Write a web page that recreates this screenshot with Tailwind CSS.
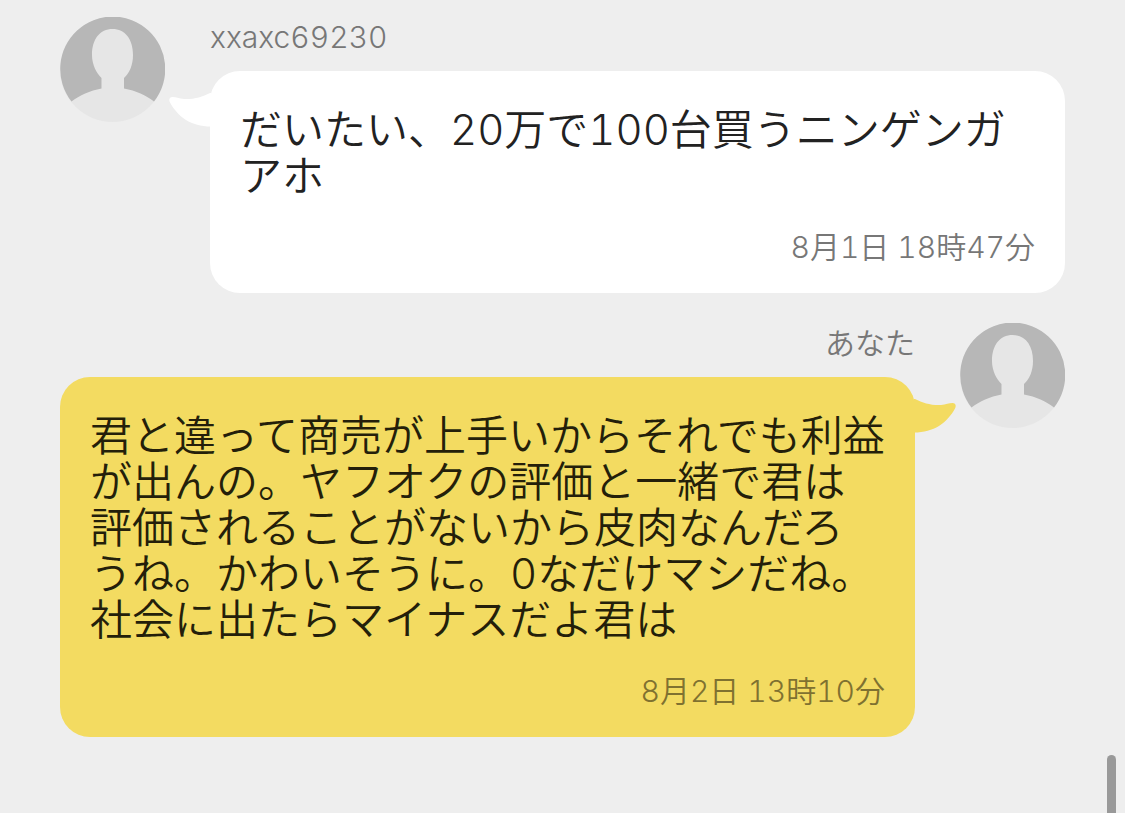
<!DOCTYPE html>
<html lang="ja">
<head>
<meta charset="utf-8">
<meta name="viewport" content="width=device-width, initial-scale=1">
<title>メッセージ</title>
<script src="https://cdn.jsdelivr.net/npm/@tailwindcss/browser@4"></script>
</head>
<body class="min-h-screen overflow-hidden bg-[#eeeeee] font-['Inter','Noto_Sans_CJK_JP',sans-serif] font-[350] tabular-nums text-[#222222]">
<svg class="hidden" aria-hidden="true">
  <symbol id="person" viewBox="0 0 105 105">
    <circle cx="52.500" cy="52.500" r="52.500" fill="#e6e6e6"/>
    <path fill="#b7b7b7" d="M11.500 84.500A52.500 52.500 0 1 1 94 84.500C86 78.500 76 73.500 64 71.500V61C69.500 56 73 48 73 38C73 22 65 12 52.500 12C40 12 32 22 32 38C32 48 36.500 56 41.500 61V71.500C30 73.500 19.500 78.500 11.500 84.500Z"/>
  </symbol>
  <symbol id="tail" viewBox="0 0 42 36">
    <path fill="currentColor" d="M41 1C33 5 25 7.500 15 7C10 6.500 7 5 3.500 5C.5 5 -.5 7.500 1 10.500C9 25 22 34.500 42 34.500V1Z"/>
  </symbol>
</svg>

<main class="flex flex-col gap-[30px] px-[60px] pt-[17px]">
  <article class="flex items-start gap-[45px]">
    <svg class="size-[105px] shrink-0" role="img" aria-label="xxaxc69230"><use href="#person"/></svg>
    <div class="min-w-0 flex-1">
      <h2 class="mb-[14px] text-[30px] leading-[40px] text-[#777777]">xxaxc69230</h2>
      <div class="relative rounded-[30px] bg-white px-[30px] pt-[36px] pb-[28px]">
        <svg class="absolute top-[21px] -left-[41px] h-[36px] w-[42px] text-white" aria-hidden="true"><use href="#tail"/></svg>
        <p class="text-[42px] leading-[46px]">だいたい、20万で100台買うニンゲンガ<br>アホ</p>
        <time class="mt-[30px] block text-right text-[30px] leading-[36px] text-[#777777]">8月1日 18時47分</time>
      </div>
    </div>
  </article>

  <article class="flex flex-row-reverse items-start gap-[45px]">
    <svg class="size-[105px] shrink-0" role="img" aria-label="あなた"><use href="#person"/></svg>
    <div class="min-w-0 flex-1">
      <h2 class="mb-[14px] text-right text-[30px] leading-[40px] text-[#777777]">あなた</h2>
      <div class="relative rounded-[30px] bg-[#f3db61] px-[30px] pt-[36px] pb-[28px]">
        <svg class="absolute top-[21px] -right-[41px] h-[36px] w-[42px] -scale-x-100 text-[#f3db61]" aria-hidden="true"><use href="#tail"/></svg>
        <p class="text-[42px] leading-[46px] whitespace-nowrap text-[#241f0a]">君と違って商売が上手いからそれでも利益<br>が出んの。ヤフオクの評価と一緒で君は<br>評価されることがないから皮肉なんだろ<br>うね。かわいそうに。0なだけマシだね。<br>社会に出たらマイナスだよ君は</p>
        <time class="mt-[30px] block text-right text-[30px] leading-[36px] text-[#7f7130]">8月2日 13時10分</time>
      </div>
    </div>
  </article>
</main>

<div class="fixed right-[9px] bottom-0 h-[58px] w-[9px] rounded-t-full bg-[#999999]" aria-hidden="true"></div>
</body>
</html>
